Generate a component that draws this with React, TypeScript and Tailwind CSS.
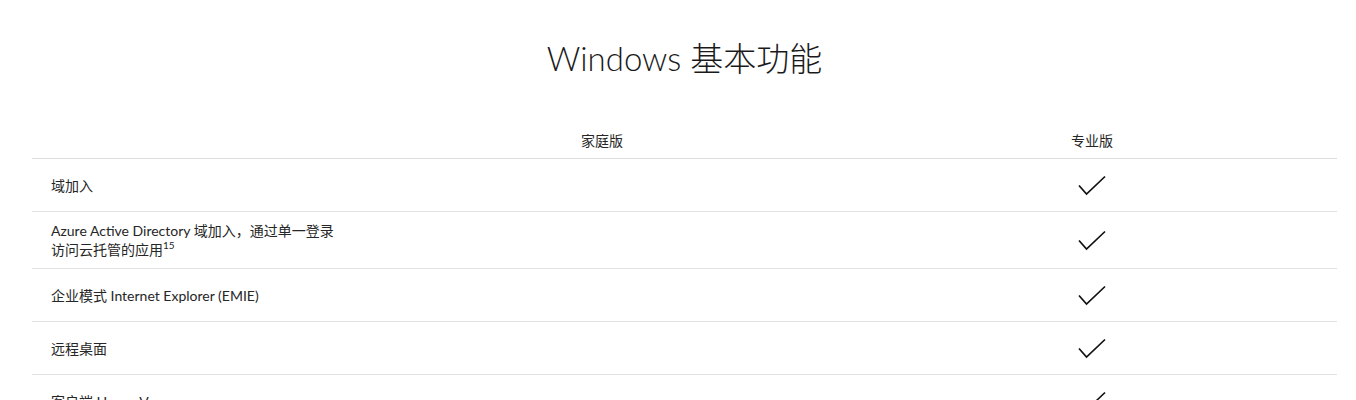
const rows: { label: React.ReactNode; home: boolean; pro: boolean }[] = [
  { label: "域加入", home: false, pro: true },
  {
    label: (
      <>
        Azure Active Directory 域加入，通过单一登录
        <br />
        访问云托管的应用
        <span className="relative -top-[6px] text-[10px] leading-none">15</span>
      </>
    ),
    home: false,
    pro: true,
  },
  { label: "企业模式 Internet Explorer (EMIE)", home: false, pro: true },
  { label: "远程桌面", home: false, pro: true },
  { label: "客户端 Hyper-V", home: false, pro: true },
  { label: "Windows Update for Business", home: false, pro: true },
];

function Check() {
  return (
    <svg width="28" height="21" viewBox="0 0 28 21" fill="none">
      <path d="M1 10.5 L8.5 19 L27 1.5" stroke="#111" strokeWidth="1.7" />
    </svg>
  );
}

export default function App() {
  return (
    <main
      className="min-h-screen w-full bg-white text-[#262626] pl-8 pr-[19px] pt-[36px]"
      style={{ fontFamily: 'Lato, "Noto Sans CJK SC", sans-serif' }}
    >
      <h1 className="text-center text-[33px] leading-[44px] font-light text-[#1a1a1a]">
        Windows 基本功能
      </h1>

      <div className="mt-[51px] w-full">
        <div className="grid grid-cols-[325px_1fr_1fr] border-b border-[#dedede] pb-[8px] text-[14px] leading-[19px]">
          <div />
          <div className="text-center">家庭版</div>
          <div className="text-center">专业版</div>
        </div>

        {rows.map((row, i) => (
          <div
            key={i}
            className="grid grid-cols-[325px_1fr_1fr] items-center border-b border-[#e3e3e3] py-[9px] text-[14px] leading-[19px]"
          >
            <div className="whitespace-nowrap px-[19px]">{row.label}</div>
            <div className="flex h-[34px] items-center justify-center">
              {row.home && <Check />}
            </div>
            <div className="flex h-[34px] items-center justify-center">
              {row.pro && <Check />}
            </div>
          </div>
        ))}
      </div>
    </main>
  );
}
